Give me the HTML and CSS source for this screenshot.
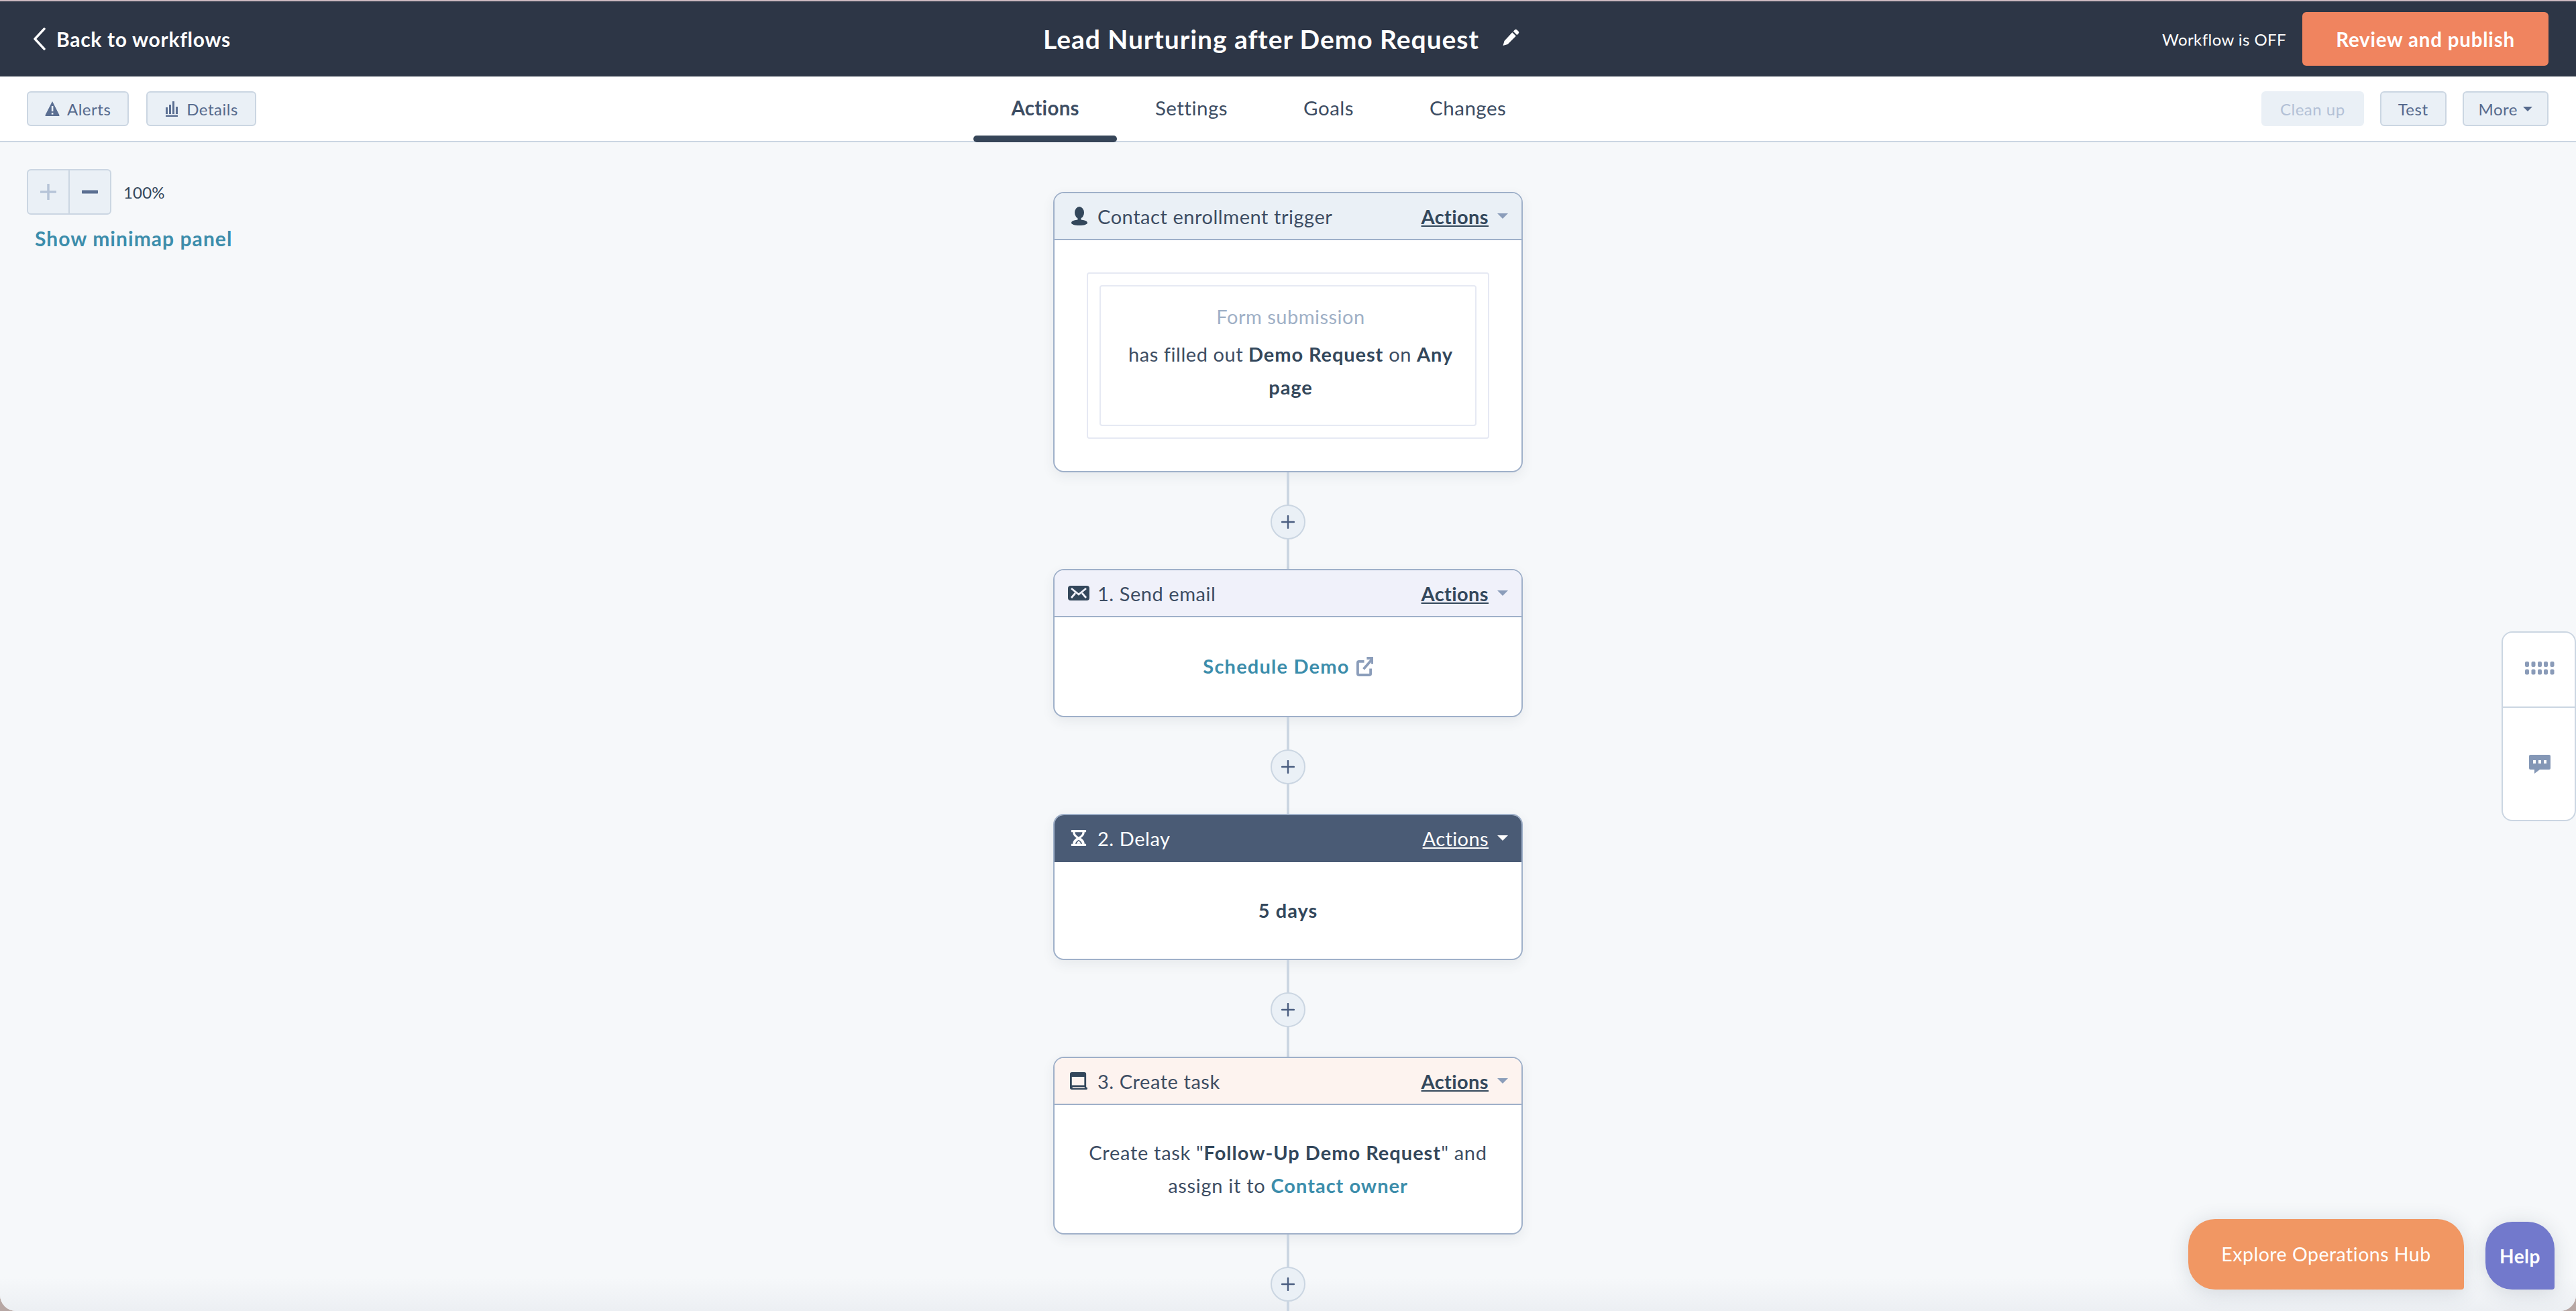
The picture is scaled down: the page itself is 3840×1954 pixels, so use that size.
FILE: index.html
```html
<!DOCTYPE html>
<html lang="en">
<head>
<meta charset="utf-8">
<title>Lead Nurturing after Demo Request</title>
<link rel="stylesheet" href="styles.css">
</head>
<body>
<div class="app">
  <header class="topbar">
    <a class="back">
      <svg class="back-icon" viewBox="0 0 20 34"><path d="M17 2 3 17l14 15" fill="none" stroke="#fff" stroke-width="3.4" stroke-linecap="round" stroke-linejoin="round"/></svg>
      <span>Back to workflows</span>
    </a>
    <div class="title-group">
      <h1 class="title">Lead Nurturing after Demo Request</h1>
      <svg class="pencil" viewBox="0 0 26 26"><path d="M19 1.5a2.4 2.4 0 0 1 3.3 0l2.2 2.2a2.4 2.4 0 0 1 0 3.3L22.3 9.200 16.800 3.700zM15.300 5.200l5.500 5.500L8.500 23 1.500 25l2-7z" fill="#fff"/></svg>
    </div>
    <div class="top-right">
      <span class="status">Workflow is OFF</span>
      <button class="publish">Review and publish</button>
    </div>
  </header>

  <nav class="subnav">
    <div class="btn-row btn-row-left">
      <button class="btn">
        <svg class="btn-icon" viewBox="0 0 22 24"><path d="M11 1 21.500 21.500a1 1 0 0 1-1 1.500H1.500a1 1 0 0 1-1-1.500z" fill="#5b6f92"/><rect x="9.800" y="8" width="2.600" height="8" fill="#eaf0f6"/><rect x="9.800" y="18" width="2.600" height="2.600" fill="#eaf0f6"/></svg>
        Alerts
      </button>
      <button class="btn">
        <svg class="btn-icon" viewBox="0 0 20 24"><path d="M1 10h3v10H1zM6 6h3v14H6zM11 1h3v19h-3zM16 9h3v11h-3zM1 21.500h18V24H1z" fill="#5b6f92"/></svg>
        Details
      </button>
    </div>
    <div class="tabs">
      <a class="tab tab-active">Actions</a>
      <a class="tab">Settings</a>
      <a class="tab">Goals</a>
      <a class="tab">Changes</a>
    </div>
    <div class="btn-row">
      <button class="btn btn-disabled">Clean up</button>
      <button class="btn">Test</button>
      <button class="btn btn-more">More <i class="caret caret-btn"></i></button>
    </div>
  </nav>

  <main class="canvas">
    <div class="zoom-tools">
      <div class="zoom-row">
        <div class="zoom-box">
          <span class="zoom-part zoom-plus"><svg viewBox="0 0 24 24"><path d="M12 1v22M1 12h22" stroke="#b6c4d8" stroke-width="3.500" stroke-linecap="round"/></svg></span>
          <span class="zoom-part"><svg viewBox="0 0 24 24"><path d="M1 12h22" stroke="#5b6f92" stroke-width="5" stroke-linecap="round"/></svg></span>
        </div>
        <span class="zoom-level">100%</span>
      </div>
      <a class="minimap">Show minimap panel</a>
    </div>

    <section class="node node-trigger">
      <div class="node-head head-trigger">
        <span class="node-title">
          <svg class="node-icon icon-person" viewBox="0 0 24 28"><ellipse cx="12" cy="9" rx="7" ry="9" fill="#33475b"/><path d="M9.500 15h5v4.500c3 .3 9.500 1.500 9.500 4.500 0 2.500-5 4-12 4S0 26.500 0 24c0-3 6.500-4.200 9.500-4.500z" fill="#33475b"/></svg>
          Contact enrollment trigger
        </span>
        <a class="node-actions">Actions</a><i class="caret"></i>
      </div>
      <div class="trigger-body">
        <div class="trigger-outer">
          <div class="trigger-inner">
            <p class="trigger-kind">Form submission</p>
            <p class="text-line text-tight">has filled out <b>Demo Request</b> on <b>Any</b> <b>page</b></p>
          </div>
        </div>
      </div>
    </section>

    <div class="link"><button class="add"><svg viewBox="0 0 20 20"><path d="M10 1v18M1 10h18" stroke="#4a5d80" stroke-width="2.400" stroke-linecap="round"/></svg></button></div>

    <section class="node node-email">
      <div class="node-head head-email">
        <span class="node-title">
          <svg class="node-icon icon-mail" viewBox="0 0 32 22"><rect width="32" height="22" rx="4" fill="#33475b"/><path d="M5 4l11 9L27 4M5 18l6-7M27 18l-6-7" fill="none" stroke="#f0f1fa" stroke-width="2.800"/></svg>
          1. Send email
        </span>
        <a class="node-actions">Actions</a><i class="caret"></i>
      </div>
      <div class="node-body"><p class="text-line"><a class="text-link link-wide">Schedule Demo</a> <svg class="ext" viewBox="0 0 26 30"><path d="M12 7H4a2 2 0 0 0-2 2v17a2 2 0 0 0 2 2h16a2 2 0 0 0 2-2v-8" fill="none" stroke="#8b9dba" stroke-width="4"/><path d="M11 19 24 4M16 2h9v9" fill="none" stroke="#8b9dba" stroke-width="4"/></svg></p></div>
    </section>

    <div class="link"><button class="add"><svg viewBox="0 0 20 20"><path d="M10 1v18M1 10h18" stroke="#4a5d80" stroke-width="2.400" stroke-linecap="round"/></svg></button></div>

    <section class="node node-delay">
      <div class="node-head head-delay">
        <span class="node-title">
          <svg class="node-icon icon-glass" viewBox="0 0 26 28"><path d="M1 1h24v3.500h-2.500c0 5-3 7-6 9.500 3 2.500 6 4.500 6 9.500H25V27H1v-3.500h2.500c0-5 3-7 6-9.500-3-2.500-6-4.500-6-9.500H1z" fill="#fff"/><path d="M7 4.500c0 4 3.500 6 6 8 2.500-2 6-4 6-8zM13 17c-2 1.500-5 3-5.500 6.500h11C18 20 15 18.500 13 17z" fill="#4a5b75"/><path d="M13 18.500c1.500 1.500 3 2.500 3.500 5h-7c.5-2.500 2-3.500 3.500-5z" fill="#fff"/></svg>
          2. Delay
        </span>
        <a class="node-actions">Actions</a><i class="caret"></i>
      </div>
      <div class="node-body"><p class="text-line"><b>5 days</b></p></div>
    </section>

    <div class="link"><button class="add"><svg viewBox="0 0 20 20"><path d="M10 1v18M1 10h18" stroke="#4a5d80" stroke-width="2.400" stroke-linecap="round"/></svg></button></div>

    <section class="node node-task">
      <div class="node-head head-task">
        <span class="node-title">
          <svg class="node-icon icon-task" viewBox="0 0 30 28"><path d="M4 0h20a3 3 0 0 1 3 3v21l2 1v1a2 2 0 0 1-2 2H4a3 3 0 0 1-3-3V3a3 3 0 0 1 3-3z" fill="#33475b"/><path d="M4 7.500h20V21H4zM5 24h19.500v1.500H5z" fill="#fef4f0"/></svg>
          3. Create task
        </span>
        <a class="node-actions">Actions</a><i class="caret"></i>
      </div>
      <div class="node-body"><p class="text-line">Create task "<b>Follow-Up Demo Request</b>" and assign it to <a class="text-link">Contact owner</a></p></div>
    </section>

    <div class="link link-last"><button class="add"><svg viewBox="0 0 20 20"><path d="M10 1v18M1 10h18" stroke="#4a5d80" stroke-width="2.400" stroke-linecap="round"/></svg></button></div>

    <aside class="side-panel">
      <div class="side-cell side-top">
        <svg class="grip" viewBox="0 0 44 20"><g fill="#8a9bb8"><rect x="0" y="0" width="6" height="8" rx="2"/><rect x="9.500" y="0" width="6" height="8" rx="2"/><rect x="19" y="0" width="6" height="8" rx="2"/><rect x="28" y="0" width="6" height="8" rx="2"/><rect x="37.500" y="0" width="6" height="8" rx="2"/><rect x="0" y="11.500" width="6" height="8" rx="2"/><rect x="9.500" y="11.500" width="6" height="8" rx="2"/><rect x="19" y="11.500" width="6" height="8" rx="2"/><rect x="28" y="11.500" width="6" height="8" rx="2"/><rect x="37.500" y="11.500" width="6" height="8" rx="2"/></g></svg>
      </div>
      <div class="side-cell">
        <svg class="chat" viewBox="0 0 32 28"><path d="M2 0h28a2 2 0 0 1 2 2v18a2 2 0 0 1-2 2H16l-8 6v-6H2a2 2 0 0 1-2-2V2a2 2 0 0 1 2-2z" fill="#8497b6"/><rect x="6" y="8" width="4" height="5" fill="#fff"/><rect x="14" y="8" width="4" height="5" fill="#fff"/><rect x="22" y="8" width="4" height="5" fill="#fff"/></svg>
      </div>
    </aside>

    <div class="float-row">
      <button class="float-btn explore">Explore Operations Hub</button>
      <button class="float-btn help">Help</button>
    </div>
  </main>
</div>
</body>
</html>
```

FILE: styles.css
```css
* { box-sizing: border-box; }
html, body { margin: 0; height: 100%; }
body {
  background: #b7a7a4;
  font-family: "Lato", "Liberation Sans", sans-serif;
  font-size: 29px;
  color: #33475b;
  overflow: hidden;
}
p { margin: 0; }
button { font: inherit; cursor: pointer; }

.app {
  height: 1954px;
  display: flex;
  flex-direction: column;
  border-radius: 0 0 24px 24px;
  overflow: hidden;
  border-top: 2px solid #cdb9c0;
  background: #f6f8fa;
}

/* top bar */
.topbar {
  flex: none;
  height: 112px;
  background: #2d3646;
  color: #fff;
  display: grid;
  grid-template-columns: 1fr auto 1fr;
  align-items: center;
  padding: 0 41px 0 49px;
}
.back { display: flex; align-items: center; gap: 15px; font-weight: 700; font-size: 30px; letter-spacing: .7px; }
.back-icon { width: 20px; height: 34px; }
.title-group { display: flex; align-items: center; gap: 34px; margin-right: 28px; }
.title { margin: 0; font-size: 39px; font-weight: 700; letter-spacing: .95px; }
.pencil { width: 26px; height: 26px; margin-top: -4px; }
.top-right { display: flex; align-items: center; justify-content: flex-end; gap: 24px; }
.status { font-size: 24px; letter-spacing: .42px; }
.publish {
  width: 367px;
  height: 80px;
  border: 0;
  border-radius: 6px;
  background: #f0845f;
  color: #fff;
  font-weight: 700;
  font-size: 29.500px;
  letter-spacing: .8px;
}

/* sub navigation */
.subnav {
  flex: none;
  height: 98px;
  background: #fff;
  border-bottom: 2px solid #cbd6e2;
  display: flex;
  justify-content: space-between;
  align-items: flex-start;
  padding: 22px 41px 0 40px;
}
.btn-row { display: flex; gap: 24px; }
.btn-row-left { gap: 26px; }
.btn {
  height: 52px;
  padding: 0 25px;
  display: flex;
  align-items: center;
  gap: 11px;
  border: 2px solid #cbd6e2;
  border-radius: 6px;
  background: #eaf0f6;
  color: #566a8d;
  font-size: 24px;
  letter-spacing: .5px;
}
.btn-disabled { border-color: #eaf0f6; color: #b3c1d6; padding: 0 26px; }
.btn-more { padding: 0 22px; gap: 8px; }
.btn-icon { width: 22px; height: 24px; }
.tabs { display: flex; height: 93px; margin-top: -22px; }
.tab {
  padding: 0 56.500px;
  display: flex;
  align-items: center;
  font-size: 29.500px;
  letter-spacing: .5px;
  color: #3d4d63;
  position: relative;
}
.tab-active { font-weight: 700; letter-spacing: .3px; }
.tab-active::after {
  content: "";
  position: absolute;
  left: 0; right: 0; bottom: -5px;
  height: 10px;
  border-radius: 5px;
  background: #364558;
}

.caret {
  display: inline-block;
  width: 0; height: 0;
  border-left: 8px solid transparent;
  border-right: 8px solid transparent;
  border-top: 8px solid #8b9dba;
}
.caret-btn { border-top-color: #566a8d; border-left-width: 7px; border-right-width: 7px; border-top-width: 7px; }

/* canvas */
.canvas {
  flex: 1;
  min-height: 0;
  position: relative;
  display: flex;
  flex-direction: column;
  align-items: center;
  padding-top: 74px;
  background: linear-gradient(to bottom, #f6f8fa calc(100% - 50px), #eceff3);
}
.zoom-tools { position: absolute; left: 40px; top: 40px; }
.zoom-row { display: flex; align-items: center; gap: 18px; }
.zoom-box {
  width: 126px;
  height: 68px;
  display: flex;
  border: 2px solid #cbd6e2;
  border-radius: 6px;
  background: #eaf0f6;
}
.zoom-part { flex: 1; display: flex; align-items: center; justify-content: center; }
.zoom-part svg { width: 24px; height: 24px; }
.zoom-plus { border-right: 2px solid #cbd6e2; }
.zoom-level { font-size: 24px; letter-spacing: .2px; }
.minimap {
  display: block;
  margin: 17px 0 0 12px;
  font-weight: 700;
  font-size: 30px;
  letter-spacing: 1.050px;
  color: #3c8dab;
}

/* workflow nodes */
.node {
  flex: none;
  width: 700px;
  background: #fff;
  border: 2px solid #9fb0c9;
  border-radius: 16px;
  box-shadow: 0 6px 18px rgba(45, 62, 80, .08);
  overflow: hidden;
  display: flex;
  flex-direction: column;
}
.node-trigger { height: 418px; }
.node-email { height: 221px; }
.node-delay { height: 218px; }
.node-task { height: 265px; }
.node-head {
  flex: none;
  height: 70px;
  display: flex;
  align-items: center;
  padding: 0 20px;
  border-bottom: 2px solid #9fb0c9;
}
.head-trigger { background: #eaf0f6; }
.head-email { background: #f0f1fa; }
.head-delay { background: #4a5b75; color: #fff; border-bottom-color: #4a5b75; }
.head-task { background: #fdf3ef; }
.node-title { flex: 1; display: flex; align-items: center; letter-spacing: .55px; color: #3d4d63; }
.head-delay .node-title { color: #fff; }
.node-icon { flex: none; }
.icon-person { width: 24px; height: 28px; margin: 0 15px 0 5px; }
.icon-mail { width: 32px; height: 22px; margin-right: 12px; }
.icon-glass { width: 24px; height: 26px; margin: 0 16px 0 4px; }
.icon-task { width: 28px; height: 26px; margin: 0 14px 0 2px; }
.node-actions { font-weight: 700; text-decoration: underline; letter-spacing: .4px; margin-right: 13px; }
.head-delay .node-actions { font-weight: 400; }
.head-delay .caret { border-top-color: #fff; }
.node-body { flex: 1; display: flex; align-items: center; justify-content: center; padding: 0 40px 2px; text-align: center; }
.text-line { line-height: 49px; letter-spacing: .7px; color: #3d4d63; }
.text-line b { color: #33475b; letter-spacing: 1px; }
.text-tight { letter-spacing: .55px; }
.text-tight b { letter-spacing: .9px; }
.text-link { color: #3c8dab; font-weight: 700; letter-spacing: 1px; }
.link-wide { letter-spacing: 1.200px; }
.ext { width: 25px; height: 29px; margin-left: 2px; vertical-align: -4px; }

.trigger-body { flex: 1; padding: 48px 48px; }
.trigger-outer { height: 248px; padding: 17px; border: 2px solid #e6e9f3; border-radius: 4px; }
.trigger-inner {
  height: 100%;
  border: 2px solid #e6e9f3;
  border-radius: 4px;
  padding: 22px 22px 22px 30px;
  text-align: center;
}
.trigger-kind { color: #9fb0c6; line-height: 46px; margin-bottom: 8px; letter-spacing: .5px; }

.link {
  flex: none;
  width: 4px;
  height: 144px;
  padding-top: 3px;
  background: #cbd6e2;
  display: flex;
  align-items: center;
  justify-content: center;
}
.link-last { height: 200px; padding: 3px 0 56px; }
.add {
  flex: none;
  width: 52px;
  height: 52px;
  padding: 0;
  border: 2px solid #cbd6e2;
  border-radius: 50%;
  background: #eaf0f6;
  display: flex;
  align-items: center;
  justify-content: center;
}
.add svg { width: 20px; height: 20px; }

/* overlays */
.side-panel {
  position: absolute;
  right: 0;
  top: 729px;
  width: 111px;
  height: 283px;
  background: #fff;
  border: 2px solid #cbd6e2;
  border-radius: 16px;
  display: flex;
  flex-direction: column;
}
.side-cell { flex: 1; display: flex; align-items: center; justify-content: center; padding-left: 2px; }
.side-top { flex: none; height: 112px; border-bottom: 2px solid #cbd6e2; padding-bottom: 4px; }
.grip { width: 44px; height: 20px; }
.chat { width: 32px; height: 28px; }
.float-row { position: absolute; right: 32px; bottom: 32px; display: flex; align-items: flex-end; gap: 32px; }
.float-btn {
  border: 0;
  color: #fff;
  border-radius: 40px 40px 4px 40px;
  box-shadow: 0 4px 30px rgba(45, 62, 80, .16);
}
.explore { width: 411px; height: 105px; background: #f19763; font-size: 28.500px; letter-spacing: .5px; padding-bottom: 2px; }
.help { width: 103px; height: 101px; background: #7279cc; font-weight: 700; font-size: 28px; letter-spacing: .5px; }
```
